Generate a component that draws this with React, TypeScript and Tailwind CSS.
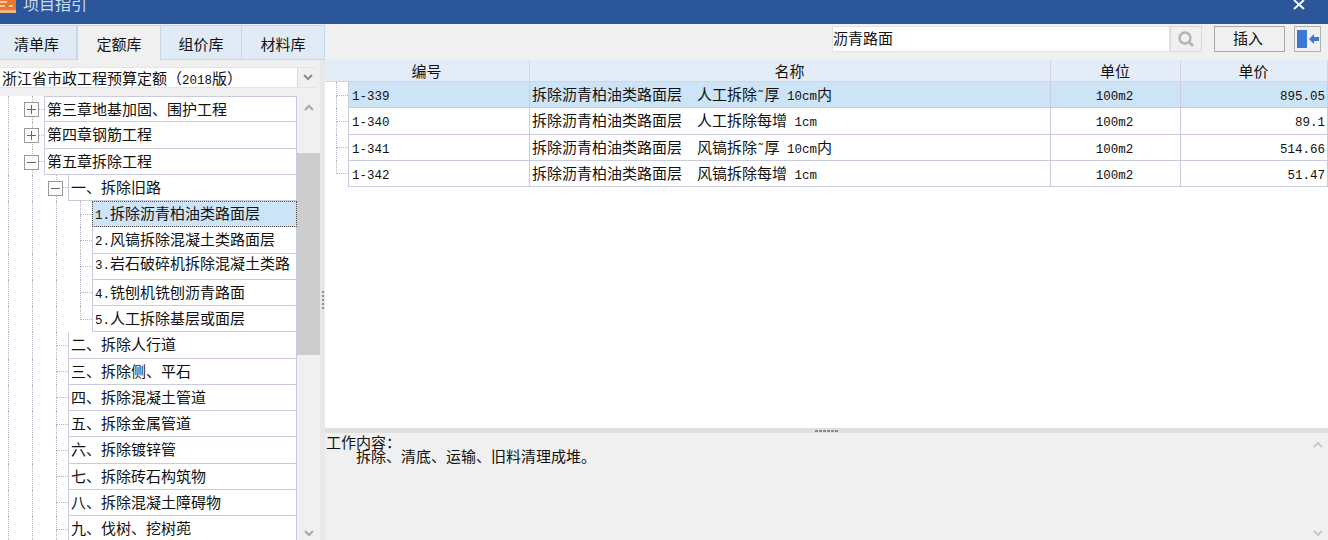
import { ReactNode } from 'react';

const tabs = ['清单库', '定额库', '组价库', '材料库'];

const treeRows = [
  { level: 0, label: '第三章地基加固、围护工程', icon: 'plus' },
  { level: 0, label: '第四章钢筋工程', icon: 'plus' },
  { level: 0, label: '第五章拆除工程', icon: 'minus' },
  { level: 1, label: '一、拆除旧路', icon: 'minus' },
  { level: 2, label: '1.拆除沥青柏油类路面层', selected: true, first: true },
  { level: 2, label: '2.风镐拆除混凝土类路面层' },
  { level: 2, label: '3.岩石破碎机拆除混凝土类路', top: true },
  { level: 2, label: '4.铣刨机铣刨沥青路面' },
  { level: 2, label: '5.人工拆除基层或面层', last: true },
  { level: 1, label: '二、拆除人行道' },
  { level: 1, label: '三、拆除侧、平石' },
  { level: 1, label: '四、拆除混凝土管道' },
  { level: 1, label: '五、拆除金属管道' },
  { level: 1, label: '六、拆除镀锌管' },
  { level: 1, label: '七、拆除砖石构筑物' },
  { level: 1, label: '八、拆除混凝土障碍物' },
  { level: 1, label: '九、伐树、挖树蔸' },
];

const items = [
  { code: '1-339', name: '拆除沥青柏油类路面层  人工拆除˜厚 10cm内', unit: '100m2', price: '895.05' },
  { code: '1-340', name: '拆除沥青柏油类路面层  人工拆除每增 1cm', unit: '100m2', price: '89.1' },
  { code: '1-341', name: '拆除沥青柏油类路面层  风镐拆除˜厚 10cm内', unit: '100m2', price: '514.66' },
  { code: '1-342', name: '拆除沥青柏油类路面层  风镐拆除每增 1cm', unit: '100m2', price: '51.47' },
];

// half-width runs go in mono so they take 7.5px like the old bitmap font
function Txt({ text }: { text: string }) {
  const parts = text.split(/([\x20-\x7e˜]+)/);
  return (
    <span className="whitespace-pre">
      {parts.map((p, i) =>
        i % 2 === 1 ? (
          <span key={i} className="font-['Liberation_Mono',monospace] text-[12.5px]">
            {p}
          </span>
        ) : (
          <span key={i}>{p}</span>
        )
      )}
    </span>
  );
}

function Chevron({ up, className }: { up?: boolean; className?: string }) {
  return (
    <svg width="10" height="7" viewBox="0 0 10 7" className={className}>
      <path d={up ? 'M1 6 L5 2 L9 6' : 'M1 1 L5 5 L9 1'} fill="none" stroke="currentColor" strokeWidth="2" />
    </svg>
  );
}

function Expander({ kind }: { kind: string }) {
  return (
    <svg width="15" height="15" viewBox="0 0 15 15" className="absolute left-[-8px] top-[6px] bg-[#f8f8f8]">
      <rect x="0.5" y="0.5" width="14" height="14" fill="#fbfbfb" stroke="#9a9a9a" />
      <path d="M3 7.5 H12" stroke="#666" />
      {kind === 'plus' && <path d="M7.5 3 V12" stroke="#666" />}
    </svg>
  );
}

function NodeLine({ last, width = 'w-3', children }: { last?: boolean; width?: string; children?: ReactNode }) {
  return (
    <div className={`relative ${width} h-full shrink-0 flex flex-col`}>
      <div className="flex-1 border-l border-b border-dotted border-[#b4b4c4]" />
      <div className={last ? 'flex-1' : 'flex-1 border-l border-dotted border-[#b4b4c4]'} />
      {children}
    </div>
  );
}

function TreeRow({ row, isFirst }: { row: (typeof treeRows)[number]; isFirst: boolean }) {
  const guides = Array.from({ length: row.level + 1 });
  return (
    <div className="flex h-[26.25px] shrink-0 pl-2">
      {guides.map((_, i) => (
        <div key={i} className="w-6 h-full shrink-0 border-l border-dotted border-[#b4b4c4]" />
      ))}
      <NodeLine last={row.last}>{row.icon && <Expander kind={row.icon} />}</NodeLine>
      <div
        className={`flex-1 min-w-0 pl-[2px] border-l border-r border-b border-[#cbcbe0] text-[15px] ${
          row.top ? 'leading-[18px]' : 'leading-[24.5px]'
        } ${isFirst ? 'border-t' : ''} ${
          row.selected ? 'bg-[#cde4f7] outline-1 outline-dotted outline-offset-[-1px] outline-[#555]' : 'bg-white'
        }`}
      >
        <Txt text={row.label} />
      </div>
    </div>
  );
}

function Tree() {
  return (
    <div className="flex-1 min-w-0 overflow-hidden flex flex-col bg-white">
      {treeRows.map((row, i) => (
        <TreeRow key={row.label} row={row} isFirst={i === 0} />
      ))}
    </div>
  );
}

function Scrollbar() {
  return (
    <div className="w-[23px] shrink-0 bg-[#f0f0f0] flex flex-col items-center">
      <div className="h-[57px] w-full flex justify-center pt-2 text-[#a8a8a8] shrink-0">
        <Chevron up />
      </div>
      <div className="h-[202px] w-full bg-[#cdcdcd] shrink-0" />
      <div className="flex-1" />
      <div className="h-[14px] pt-1 text-[#a8a8a8] shrink-0">
        <Chevron />
      </div>
    </div>
  );
}

function Header({ children, className = '' }: { children: ReactNode; className?: string }) {
  return (
    <div className={`h-[22px] bg-[#e4ecf7] border-r border-b border-[#d0d4e8] pr-px text-center text-[15px] leading-[22px] ${className}`}>
      {children}
    </div>
  );
}

function ItemRow({ item, selected, last }: { item: (typeof items)[number]; selected: boolean; last: boolean }) {
  const bg = selected ? 'bg-[#cde4f7]' : 'bg-white';
  const cell = `h-[26.25px] border-r border-b border-[#cbcbe0] text-[15px] leading-[23px] ${bg}`;
  return (
    <>
      <div className="h-[26.25px] border-r border-[#cbcbe0] pl-[11px] flex">
        <NodeLine last={last} width="w-full" />
      </div>
      <div className={`${cell} pl-[3px]`}>
        <Txt text={item.code} />
      </div>
      <div className={`${cell} pl-[2px]`}>
        <Txt text={item.name} />
      </div>
      <div className={`${cell} text-center pr-[2px]`}>
        <Txt text={item.unit} />
      </div>
      <div className={`${cell} text-right pr-[2px]`}>
        <Txt text={item.price} />
      </div>
    </>
  );
}

export default function App() {
  return (
    <div className="w-[1328px] h-[540px] overflow-hidden flex flex-col bg-[#f0f0f0] text-[#111] font-['Noto_Sans_CJK_SC',sans-serif]">
      {/* Title bar */}
      <div className="h-6 shrink-0 bg-[#2b579a] overflow-hidden flex items-start justify-between">
        <div className="flex items-start">
          <svg width="17" height="14" viewBox="0 0 17 14" className="shrink-0">
            <rect x="0" y="-3" width="16" height="16" rx="1" fill="#e9772e" />
            <path d="M0 2 H7 M0 6 H5 M9 6 H13" stroke="#fbe3cf" strokeWidth="1.5" />
            <rect x="0" y="10" width="16" height="3" fill="#f4b183" />
          </svg>
          <span className="ml-[6px] -mt-[8px] text-[16px] leading-[22px] text-[#cfdbec]">项目指引</span>
        </div>
        <svg width="12" height="10" viewBox="0 0 12 10" className="mr-[23px] mt-0">
          <path d="M1 0 L11 9 M11 0 L1 9" stroke="#f4f6fa" strokeWidth="2" />
        </svg>
      </div>

      {/* Tabs and search */}
      <div className="h-9 shrink-0 flex">
        <div className="flex w-[325px] shrink-0 pt-px">
          {tabs.map((t, i) => (
            <div
              key={t}
              className={`text-center text-[15px] leading-[35px] border-t border-r border-[#c4d8ec] ${
                i === 0 ? 'w-[77px] pr-[3px]' : i === 1 ? 'w-[84px]' : i === 2 ? 'w-[81px]' : 'w-[83px]'
              } ${i === 1 ? 'bg-[#f0f0f0] border-l' : 'bg-[#e0ebf6] border-b'}`}
            >
              {t}
            </div>
          ))}
        </div>
        <div className="flex-1 flex items-start pt-[2px] pl-[507px]">
          <input
            readOnly
            value="沥青路面"
            className="w-[338px] h-[26px] bg-white border border-[#e2e2e2] pb-[3px] text-[15px] text-[#111] outline-none"
          />
          <div className="w-8 h-[26px] border border-[#d8d8d8] bg-[#f0f0f0] flex items-center justify-center">
            <svg width="18" height="18" viewBox="0 0 18 18">
              <circle cx="8" cy="8" r="5.5" fill="none" stroke="#b4b4b4" strokeWidth="2.5" />
              <path d="M12 12 L16 16" stroke="#b4b4b4" strokeWidth="3" />
            </svg>
          </div>
          <button className="ml-3 w-[71px] h-[26px] border border-[#a8a8a8] bg-[#f0f0f0] pr-[3px] pb-[2px] text-[15px] leading-[20px] text-[#111]">
            插入
          </button>
          <div className="ml-[9px] w-[27px] h-[26px] border border-[#b0b0b0] bg-[#f0f0f0] flex items-center pl-[2px]">
            <svg width="23" height="20" viewBox="0 0 23 20">
              <rect x="0" y="1" width="10" height="18" fill="#3f78d0" />
              <path d="M12 10 L17 5 V8 H22 V12 H17 V15 Z" fill="#3f78d0" />
            </svg>
          </div>
        </div>
      </div>

      <div className="flex-1 min-h-0 flex">
        {/* Left panel */}
        <div className="w-[320px] shrink-0 flex flex-col">
          <div className="h-[36px] shrink-0 pt-[7px] pr-[3px]">
            <div className="h-[21px] flex bg-white border-y border-[#e4e4e4]">
              <div className="flex-1 pl-[2px] text-[15px] leading-[19px] whitespace-nowrap overflow-hidden">
                <Txt text="浙江省市政工程预算定额（2018版）" />
              </div>
              <div className="w-[20px] bg-[#f0f0f0] border-l border-[#d8d8d8] flex items-center justify-center text-[#8e8e8e]">
                <Chevron />
              </div>
            </div>
          </div>
          <div className="flex-1 min-h-0 flex">
            <Tree />
            <Scrollbar />
          </div>
        </div>

        {/* Splitter */}
        <div className="w-[5px] shrink-0 bg-[#e8e8e8] flex flex-col items-center justify-center gap-[2px]">
          {[0, 1, 2, 3, 4].map(i => (
            <div key={i} className="w-[2px] h-[2px] bg-[#8c8c8c]" />
          ))}
        </div>

        {/* Right panel */}
        <div className="flex-1 min-w-0 flex flex-col">
          <div className="h-[368px] shrink-0 bg-white overflow-hidden">
            <div className="grid grid-cols-[24px_181px_521px_130px_147px]">
              <Header className="col-span-2">编号</Header>
              <Header>名称</Header>
              <Header>单位</Header>
              <Header>单价</Header>
              {items.map((item, i) => (
                <ItemRow key={item.code} item={item} selected={i === 0} last={i === items.length - 1} />
              ))}
            </div>
          </div>
          <div className="h-[5px] shrink-0 bg-[#e0e0e0] flex items-center justify-center gap-px">
            {[0, 1, 2, 3, 4, 5].map(i => (
              <div key={i} className="w-[3px] h-[2px] bg-[#8c8c8c]" />
            ))}
          </div>
          <div className="flex-1 min-h-0 flex bg-[#f0f0f0]">
            <div className="flex-1 pl-px pt-[2px] text-[15px] leading-[14px]">
              <div>工作内容：</div>
              <div className="pl-[30px]">拆除、清底、运输、旧料清理成堆。</div>
            </div>
            <div className="w-5 flex flex-col items-center justify-between pt-2 pb-[3px] text-[#c8c8c8]">
              <Chevron up />
              <Chevron />
            </div>
          </div>
        </div>
      </div>
    </div>
  );
}
